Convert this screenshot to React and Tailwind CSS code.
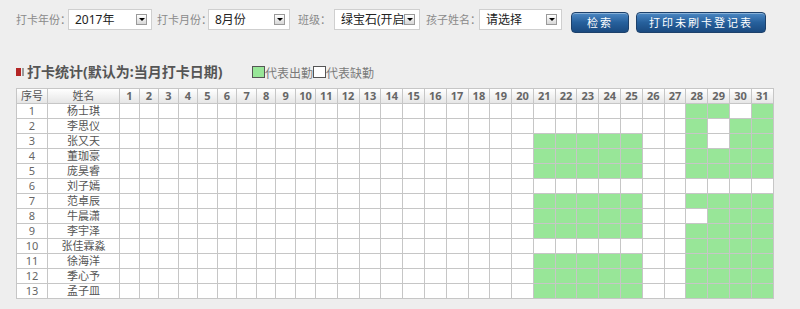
import React from "react";

const W = [21, 22, 23, 24, 25];
const ALL_END = [28, 29, 30, 31];

const students = [
  { name: "杨士琪", on: [28, 29, 31] },
  { name: "李思仪", on: [28, 30, 31] },
  { name: "张又天", on: [...W, 28, 30, 31] },
  { name: "董珈豪", on: [...W, ...ALL_END] },
  { name: "庞昊睿", on: [...W, ...ALL_END] },
  { name: "刘子嫣", on: [] },
  { name: "范卓辰", on: [...W, ...ALL_END] },
  { name: "牛晨潇", on: [...W, 29, 30, 31] },
  { name: "李宇泽", on: [...W, ...ALL_END] },
  { name: "张佳霖淼", on: [...ALL_END] },
  { name: "徐海洋", on: [...W, ...ALL_END] },
  { name: "季心予", on: [...W, ...ALL_END] },
  { name: "孟子皿", on: [...W, ...ALL_END] },
];

const DAYS = Array.from({ length: 31 }, (_, i) => i + 1);

const Select = ({ value, width }) => (
  <div className={`flex h-[21px] items-center border border-[#cfcfcf] bg-white ${width}`}>
    <span className="flex-1 overflow-hidden whitespace-nowrap pl-[6px] text-[12px] leading-[19px] text-[#222]">
      {value}
    </span>
    <span className="mr-[4px] flex h-[11px] w-[11px] shrink-0 items-center justify-center border border-[#9a9a9a] bg-linear-to-b from-white to-[#d8d8d8]">
      <span className="h-0 w-0 border-x-[3px] border-t-[3px] border-x-transparent border-t-black" />
    </span>
  </div>
);

const Label = ({ children, width }) => (
  <span className={`text-[11px] leading-none whitespace-nowrap text-[#8a8a8a] ${width}`}>{children}</span>
);

const Button = ({ children, width }) => (
  <button
    type="button"
    className={`mt-px h-[21px] rounded-[4px] border border-[#1d416b] bg-linear-to-b from-[#4d89c4] via-[#26609c] to-[#1a4a80] text-[11px] leading-none tracking-[2px] text-white shadow-[inset_0_1px_0_rgba(255,255,255,0.35)] ${width}`}
  >
    {children}
  </button>
);

export default function App() {
  return (
    <div className="h-[309px] w-[800px] overflow-hidden bg-[#eeeeee] font-['Noto_Sans','Noto_Sans_CJK_SC',sans-serif]">
      {/* 查询条件 */}
      <div className="flex items-start pl-4 pt-[9px]">
        <div className="flex h-[21px] items-center">
          <Label width="w-[52px]">打卡年份：</Label>
        </div>
        <Select value="2017年" width="w-[84px]" />
        <div className="ml-[5px] flex h-[21px] items-center">
          <Label width="w-[51px]">打卡月份：</Label>
        </div>
        <Select value="8月份" width="w-[82px]" />
        <div className="ml-[8px] flex h-[21px] items-center">
          <Label width="w-[36px]">班级：</Label>
        </div>
        <Select value="绿宝石(开启)" width="w-[86px]" />
        <div className="ml-[6px] flex h-[21px] items-center">
          <Label width="w-[53px]">孩子姓名：</Label>
        </div>
        <Select value="请选择" width="w-[83px]" />
        <div className="ml-[9px]">
          <Button width="w-[58px]">检索</Button>
        </div>
        <div className="ml-[7px]">
          <Button width="w-[130px]">打印未刷卡登记表</Button>
        </div>
      </div>

      {/* 标题 + 图例 */}
      <div className="mt-[29px] flex h-[20px] items-center pl-4">
        <div className="flex w-[236px] items-center">
          <span className="h-[8px] w-[5px] bg-[#b42525]" />
          <span className="ml-[1px] h-[8px] w-[2px] bg-[#9a9a9a]" />
          <span className="ml-[3px] text-[14px] leading-[20px] font-bold whitespace-nowrap text-[#555]">
            打卡统计(默认为:当月打卡日期)
          </span>
        </div>
        <div className="flex items-center text-[12px] leading-[16px] text-[#7a7a7a]">
          <span className="h-[12px] w-[13px] border border-[#555] bg-[#98e698]" />
          <span className="mt-[3px] w-[48px]">代表出勤</span>
          <span className="h-[12px] w-[13px] border border-[#555] bg-white" />
          <span className="mt-[3px]">代表缺勤</span>
        </div>
      </div>

      {/* 打卡表 */}
      <div className="pl-4">
        <div className="inline-grid auto-rows-[14px] grid-cols-[30px_71px_repeat(9,18.56px)_19px_repeat(21,20.81px)] gap-px bg-[#c6c6c6] p-px">
          <div className="flex items-center justify-center bg-linear-to-b from-white to-[#e6e6e6] text-[11px] leading-none text-[#555]">
            序号
          </div>
          <div className="flex items-center justify-center bg-linear-to-b from-white to-[#e6e6e6] text-[11px] leading-none text-[#555]">
            姓名
          </div>
          {DAYS.map((d) => (
            <div
              key={d}
              className="flex items-center justify-center bg-linear-to-b from-white to-[#e6e6e6] text-[11px] leading-none font-bold text-[#666]"
            >
              {d}
            </div>
          ))}

          {students.map((s, i) => (
            <React.Fragment key={s.name}>
              <div className="flex items-center justify-center bg-white text-[11px] leading-none text-[#666]">
                {i + 1}
              </div>
              <div className="flex items-center justify-center bg-white text-[11px] leading-none text-[#555]">
                {s.name}
              </div>
              {DAYS.map((d) => (
                <div key={d} className={s.on.includes(d) ? "bg-[#98e698]" : "bg-white"} />
              ))}
            </React.Fragment>
          ))}
        </div>
      </div>
    </div>
  );
}
